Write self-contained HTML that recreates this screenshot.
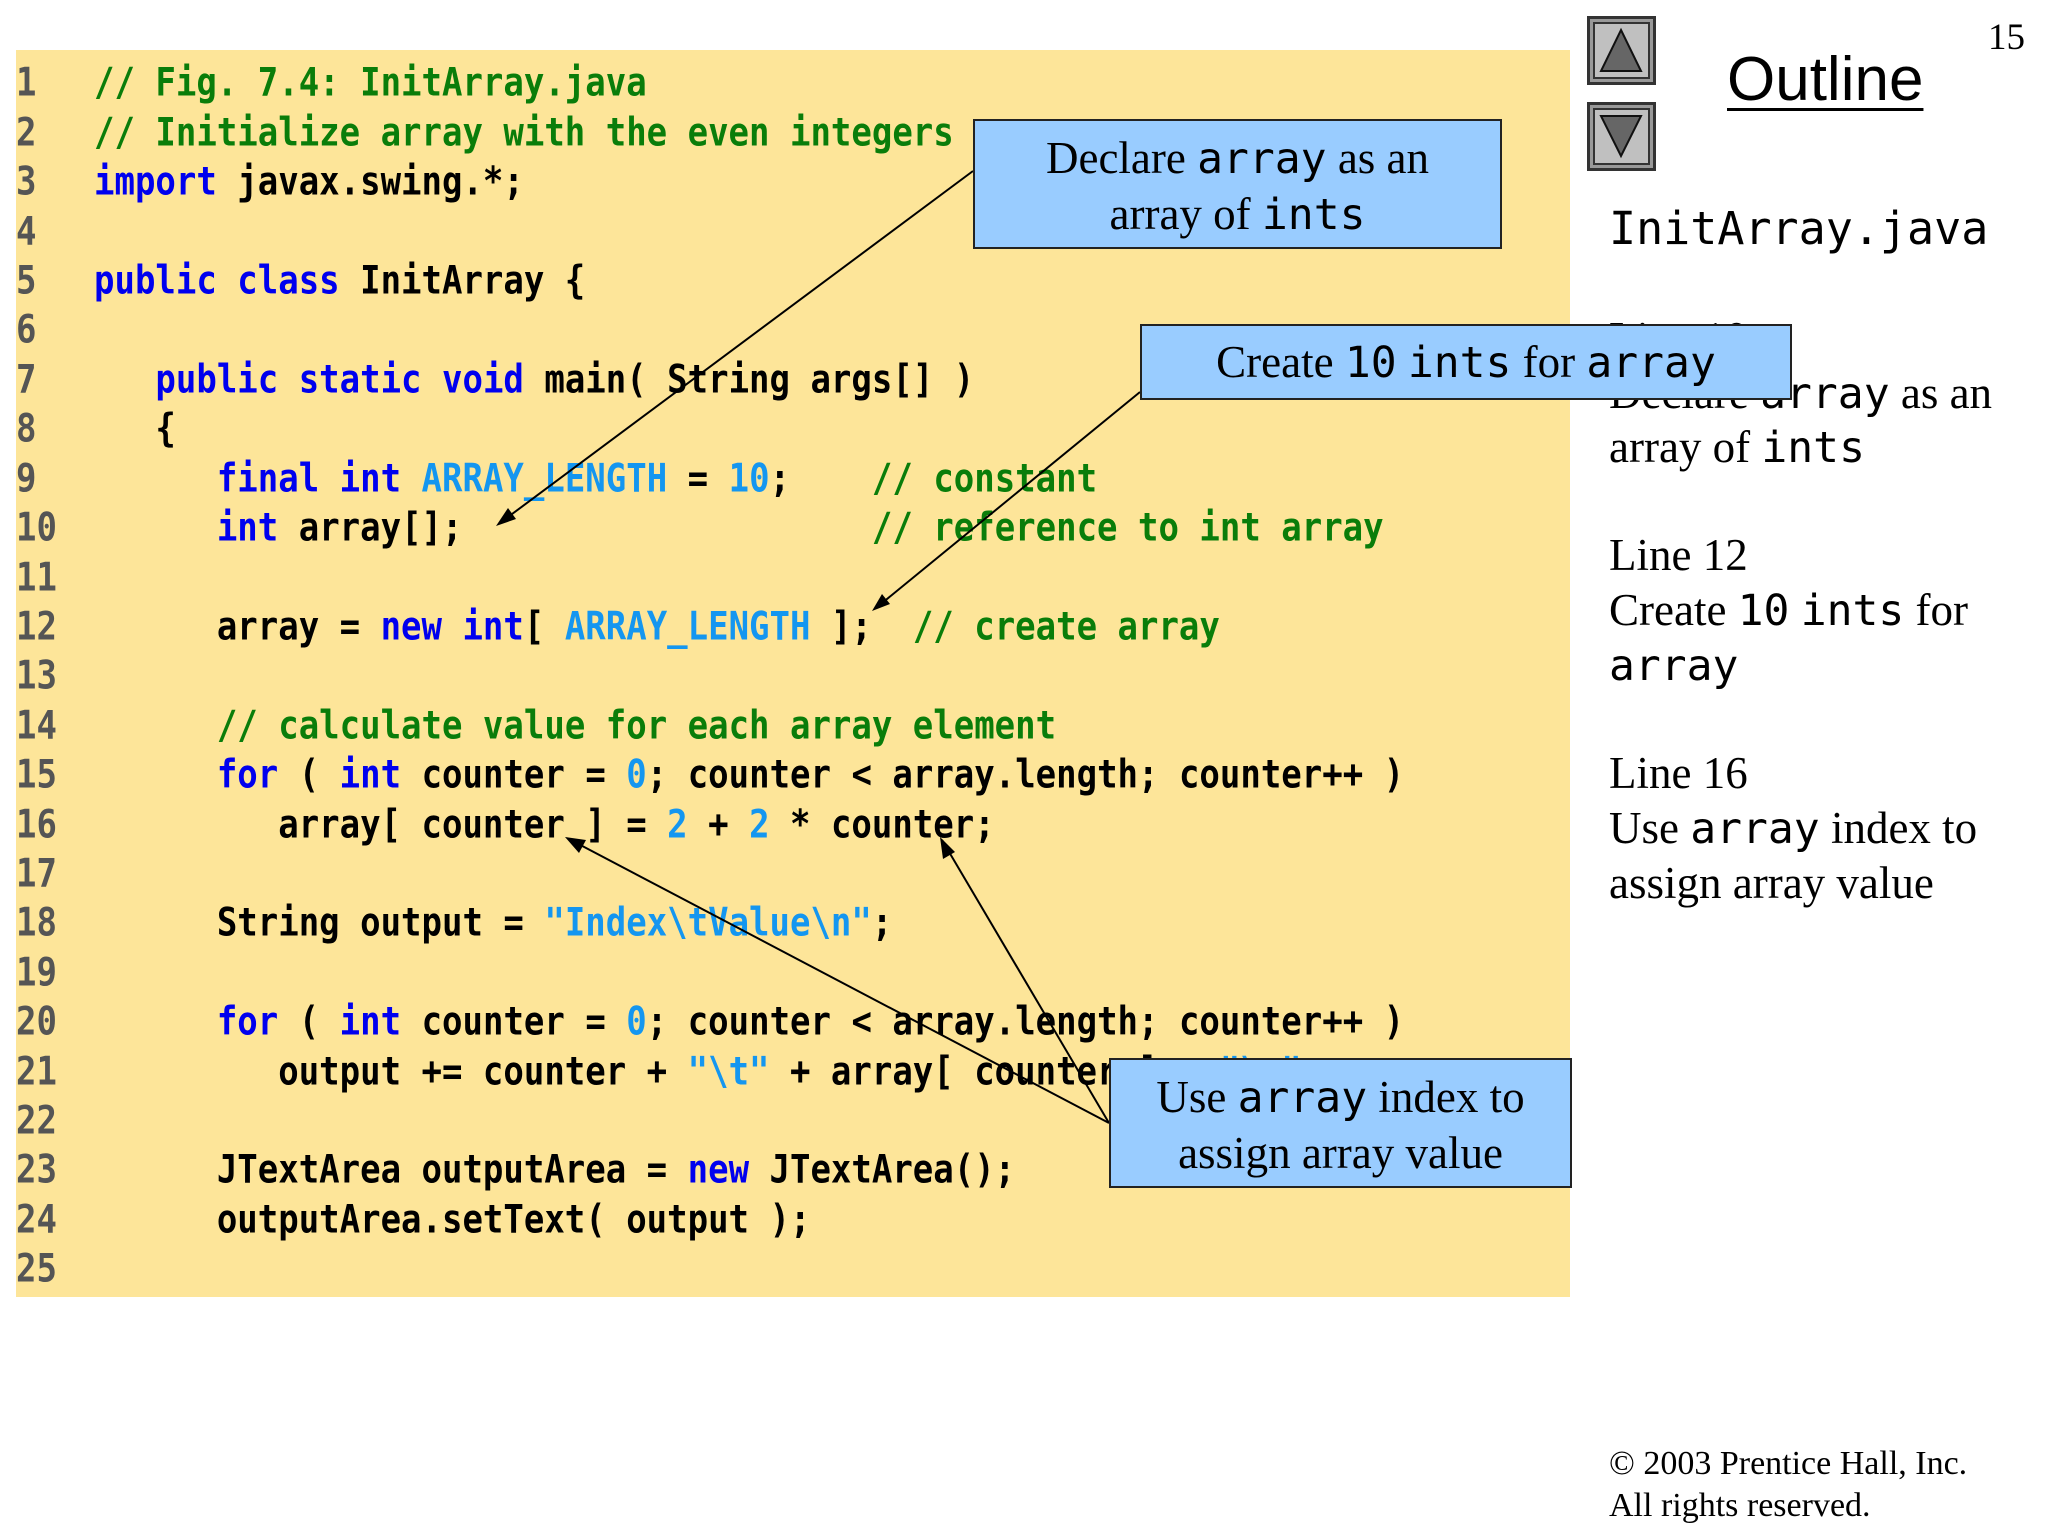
<!DOCTYPE html>
<html><head><meta charset="utf-8"><style>
body{margin:0;width:2048px;height:1536px;background:#fff;position:relative;overflow:hidden;font-family:"Liberation Serif",serif}
.panel{position:absolute;left:16px;top:50px;width:1554px;height:1247px;background:#fde599}
.ln,.cl{position:absolute;font-family:"DejaVu Sans Mono",monospace;font-weight:bold;font-size:34px;line-height:43px;height:43px;white-space:pre;transform:scaleY(1.15);transform-origin:0 50%}
.ln{left:16px;color:#555}
.cl{left:94px;color:#000}
.k{color:#0000ee}.c{color:#0a7d0a}.v{color:#1496f0}
.box{position:absolute;background:#99ccff;border:2.5px solid #222;box-sizing:border-box;text-align:center;font-size:45px;line-height:55px;color:#000}
.m{font-family:"DejaVu Sans Mono",monospace;font-size:43px}
.t{position:absolute;left:1609px;font-size:45px;line-height:54px;white-space:nowrap}
.t .m{font-size:43px}
.btn{position:absolute;left:1587px;width:69px;height:69px;background:#c0c0c0;border:3px solid #333;box-sizing:border-box;box-shadow:inset 0 0 0 3px #999,inset 0 0 0 5px #333}
</style></head><body>
<div class="panel"></div>
<div class="ln" style="top:62px">1</div><div class="cl" style="top:62px"><span class="c">// Fig. 7.4: InitArray.java</span></div>
<div class="ln" style="top:112px">2</div><div class="cl" style="top:112px"><span class="c">// Initialize array with the even integers</span></div>
<div class="ln" style="top:161px">3</div><div class="cl" style="top:161px"><span class="k">import</span> javax.swing.*;</div>
<div class="ln" style="top:211px">4</div>
<div class="ln" style="top:260px">5</div><div class="cl" style="top:260px"><span class="k">public class</span> InitArray {</div>
<div class="ln" style="top:309px">6</div>
<div class="ln" style="top:359px">7</div><div class="cl" style="top:359px">   <span class="k">public static void</span> main( String args[] )</div>
<div class="ln" style="top:408px">8</div><div class="cl" style="top:408px">   {</div>
<div class="ln" style="top:458px">9</div><div class="cl" style="top:458px">      <span class="k">final int</span> <span class="v">ARRAY_LENGTH</span> = <span class="v">10</span>;    <span class="c">// constant</span></div>
<div class="ln" style="top:507px">10</div><div class="cl" style="top:507px">      <span class="k">int</span> array[];                    <span class="c">// reference to int array</span></div>
<div class="ln" style="top:557px">11</div>
<div class="ln" style="top:606px">12</div><div class="cl" style="top:606px">      array = <span class="k">new int</span>[ <span class="v">ARRAY_LENGTH</span> ];  <span class="c">// create array</span></div>
<div class="ln" style="top:655px">13</div>
<div class="ln" style="top:705px">14</div><div class="cl" style="top:705px">      <span class="c">// calculate value for each array element</span></div>
<div class="ln" style="top:754px">15</div><div class="cl" style="top:754px">      <span class="k">for</span> ( <span class="k">int</span> counter = <span class="v">0</span>; counter &lt; array.length; counter++ )</div>
<div class="ln" style="top:804px">16</div><div class="cl" style="top:804px">         array[ counter ] = <span class="v">2</span> + <span class="v">2</span> * counter;</div>
<div class="ln" style="top:853px">17</div>
<div class="ln" style="top:902px">18</div><div class="cl" style="top:902px">      String output = <span class="v">"Index\tValue\n"</span>;</div>
<div class="ln" style="top:952px">19</div>
<div class="ln" style="top:1001px">20</div><div class="cl" style="top:1001px">      <span class="k">for</span> ( <span class="k">int</span> counter = <span class="v">0</span>; counter &lt; array.length; counter++ )</div>
<div class="ln" style="top:1051px">21</div><div class="cl" style="top:1051px">         output += counter + <span class="v">"\t"</span> + array[ counter ] + <span class="v">"\n"</span>;</div>
<div class="ln" style="top:1100px">22</div>
<div class="ln" style="top:1149px">23</div><div class="cl" style="top:1149px">      JTextArea outputArea = <span class="k">new</span> JTextArea();</div>
<div class="ln" style="top:1199px">24</div><div class="cl" style="top:1199px">      outputArea.setText( output );</div>
<div class="ln" style="top:1248px">25</div>

<div class="btn" style="top:16px"></div><div class="btn" style="top:102px"></div>
<svg style="position:absolute;left:0;top:0" width="2048" height="1536">
<polygon points="1621,30 1641,71 1601,71" fill="#666" stroke="#111" stroke-width="2"/>
<polygon points="1601,116 1641,116 1621,156" fill="#666" stroke="#111" stroke-width="2"/>
<g stroke="#000" stroke-width="2" fill="#000">
<line x1="973" y1="171" x2="500" y2="523"/><polygon points="496,526 508,508 516,519" stroke="none"/>
<line x1="1140" y1="392" x2="876" y2="608"/><polygon points="872,611 882,594 890,604" stroke="none"/>
<line x1="1109" y1="1123" x2="569" y2="839"/><polygon points="565,837 586,840 579,853" stroke="none"/>
<line x1="1109" y1="1123" x2="942" y2="840"/><polygon points="940,837 955,852 943,859" stroke="none"/>
</g></svg>

<div style="position:absolute;left:1988px;top:16px;font-size:37px">15</div>
<div style="position:absolute;left:1727px;top:44px;font-family:'Liberation Sans',sans-serif;font-size:62px;text-decoration:underline;text-decoration-thickness:3px;text-underline-offset:8px">Outline</div>
<div style="position:absolute;left:1609px;top:202px;font-family:'DejaVu Sans Mono',monospace;font-size:45px;line-height:54px">InitArray.java</div>
<div class="t" style="top:311px">Line 10</div>
<div class="t" style="top:366px">Declare <span class="m">array</span> as an</div>
<div class="t" style="top:420px">array of <span class="m">ints</span></div>
<div class="t" style="top:528px">Line 12</div>
<div class="t" style="top:583px">Create <span class="m">10</span> <span class="m">ints</span> for</div>
<div class="t" style="top:638px"><span class="m">array</span></div>
<div class="t" style="top:746px">Line 16</div>
<div class="t" style="top:801px">Use <span class="m">array</span> index to</div>
<div class="t" style="top:856px">assign array value</div>
<div style="position:absolute;left:1609px;top:1443px;font-size:34px;line-height:42px">© 2003 Prentice Hall, Inc.<br>All rights reserved.</div>

<div class="box" style="left:973px;top:119px;width:529px;height:130px;padding-top:10px">Declare <span class="m">array</span> as an<br>array of <span class="m">ints</span></div>
<div class="box" style="left:1140px;top:324px;width:652px;height:76px;padding-top:9px">Create <span class="m">10</span> <span class="m">ints</span> for <span class="m">array</span></div>
<div class="box" style="left:1109px;top:1058px;width:463px;height:130px;padding-top:10px">Use <span class="m">array</span> index to<br>assign array value</div>
</body></html>
